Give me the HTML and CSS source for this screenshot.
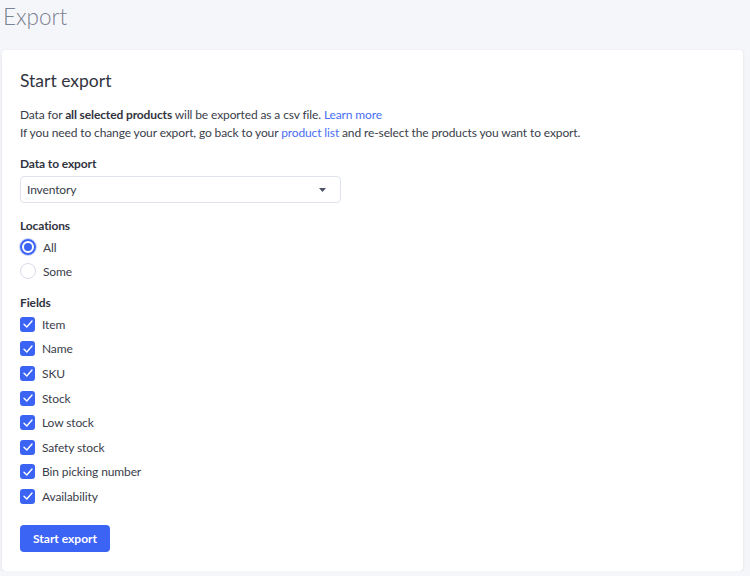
FILE: index.html
```html
<!DOCTYPE html>
<html>
<head>
<meta charset="utf-8">
<link rel="stylesheet" href="styles.css">
</head>
<body>
<h1 class="page-title">Export</h1>
<div class="card">
  <h2 class="card-title">Start export</h2>
  <p class="intro">Data for <strong>all selected products</strong> will be exported as a csv file. <a href="#">Learn more</a><br>If you need to change your export, go back to your <a href="#">product list</a> and re-select the products you want to export.</p>
  <div class="label">Data to export</div>
  <div class="select">
    <span>Inventory</span>
    <svg class="caret" width="7" height="4" viewBox="0 0 7 4"><path d="M0 0h7L3.5 4z" fill="#4d5166"/></svg>
  </div>
  <div class="label label-loc">Locations</div>
  <div class="radios">
    <div class="radio-row"><span class="radio checked"></span><span>All</span></div>
    <div class="radio-row"><span class="radio"></span><span>Some</span></div>
  </div>
  <div class="label label-fields">Fields</div>
  <div class="checks">
    <div class="check-row"><span class="check"><svg width="12" height="10" viewBox="0 0 12 10"><path d="M2 5.2l2.8 2.8L10 2" fill="none" stroke="#fff" stroke-width="1.4" stroke-linecap="round" stroke-linejoin="round"/></svg></span><span>Item</span></div>
    <div class="check-row"><span class="check"><svg width="12" height="10" viewBox="0 0 12 10"><path d="M2 5.2l2.8 2.8L10 2" fill="none" stroke="#fff" stroke-width="1.4" stroke-linecap="round" stroke-linejoin="round"/></svg></span><span>Name</span></div>
    <div class="check-row"><span class="check"><svg width="12" height="10" viewBox="0 0 12 10"><path d="M2 5.2l2.8 2.8L10 2" fill="none" stroke="#fff" stroke-width="1.4" stroke-linecap="round" stroke-linejoin="round"/></svg></span><span>SKU</span></div>
    <div class="check-row"><span class="check"><svg width="12" height="10" viewBox="0 0 12 10"><path d="M2 5.2l2.8 2.8L10 2" fill="none" stroke="#fff" stroke-width="1.4" stroke-linecap="round" stroke-linejoin="round"/></svg></span><span>Stock</span></div>
    <div class="check-row"><span class="check"><svg width="12" height="10" viewBox="0 0 12 10"><path d="M2 5.2l2.8 2.8L10 2" fill="none" stroke="#fff" stroke-width="1.4" stroke-linecap="round" stroke-linejoin="round"/></svg></span><span>Low stock</span></div>
    <div class="check-row"><span class="check"><svg width="12" height="10" viewBox="0 0 12 10"><path d="M2 5.2l2.8 2.8L10 2" fill="none" stroke="#fff" stroke-width="1.4" stroke-linecap="round" stroke-linejoin="round"/></svg></span><span>Safety stock</span></div>
    <div class="check-row"><span class="check"><svg width="12" height="10" viewBox="0 0 12 10"><path d="M2 5.2l2.8 2.8L10 2" fill="none" stroke="#fff" stroke-width="1.4" stroke-linecap="round" stroke-linejoin="round"/></svg></span><span>Bin picking number</span></div>
    <div class="check-row"><span class="check"><svg width="12" height="10" viewBox="0 0 12 10"><path d="M2 5.2l2.8 2.8L10 2" fill="none" stroke="#fff" stroke-width="1.4" stroke-linecap="round" stroke-linejoin="round"/></svg></span><span>Availability</span></div>
  </div>
  <button class="btn">Start export</button>
</div>
</body>
</html>
```

FILE: styles.css
```css
html, body {
  margin: 0;
  padding: 0;
}
body {
  background: #f5f6f9;
  font-family: Lato, "Open Sans", sans-serif;
  font-size: 12px;
  letter-spacing: -0.12px;
  color: #313440;
}
.page-title {
  margin: 0;
  padding: 0 0 0 3px;
  height: 50px;
  line-height: 33px;
  font-size: 22.5px;
  font-weight: 300;
  letter-spacing: 0;
  color: #7d8192;
}
.card {
  width: 741px;
  margin-left: 2px;
  box-sizing: border-box;
  background: #fff;
  border-radius: 4px;
  box-shadow: 0 1px 3px rgba(40, 50, 90, 0.12);
  padding: 18px 18px 19px 18px;
}
.card-title {
  margin: 0;
  font-size: 17.5px;
  line-height: 25px;
  font-weight: 400;
  letter-spacing: 0;
  color: #313440;
}
.intro {
  margin: 13px 0 0 0;
  line-height: 18px;
  color: #3a3d4a;
}
.intro strong {
  font-weight: 700;
  color: #313440;
}
.intro a {
  color: #4a6ef4;
  text-decoration: none;
}
.label {
  margin-top: 13px;
  line-height: 18px;
  font-weight: 700;
}
.select {
  margin-top: 3px;
  width: 321px;
  height: 27px;
  box-sizing: border-box;
  border: 1px solid #dfe3ed;
  border-radius: 4px;
  display: flex;
  align-items: center;
  justify-content: space-between;
  padding: 0 14px 0 6px;
  color: #3a3d4a;
}
.label-loc {
  margin-top: 14px;
}
.radio-row, .check-row {
  display: flex;
  align-items: center;
  height: 24px;
  color: #3a3d4a;
}
.radio-row {
  gap: 7px;
}
.radio {
  width: 14px;
  height: 14px;
  border: 1px solid #d9dce9;
  border-radius: 50%;
  box-sizing: content-box;
  position: relative;
}
.radio.checked {
  border: 2px solid #3c64f4;
  width: 12px;
  height: 12px;
  box-shadow: 0 0 0 1px #c9d4fb;
}
.radio.checked::after {
  content: "";
  position: absolute;
  left: 2px;
  top: 2px;
  width: 8px;
  height: 8px;
  border-radius: 50%;
  background: #3c64f4;
}
.label-fields {
  margin-top: 11px;
}
.check-row {
  height: 24.6px;
  gap: 7px;
}
.check {
  width: 15px;
  height: 15px;
  border-radius: 3px;
  background: #3c64f4;
  display: flex;
  align-items: center;
  justify-content: center;
}
.btn {
  margin-top: 16px;
  height: 27px;
  width: 90px;
  border: 0;
  border-radius: 4px;
  background: #3c64f4;
  color: #fff;
  font-family: inherit;
  font-size: 12px;
  font-weight: 700;
  letter-spacing: 0;
  padding: 0;
  display: block;
}
```
